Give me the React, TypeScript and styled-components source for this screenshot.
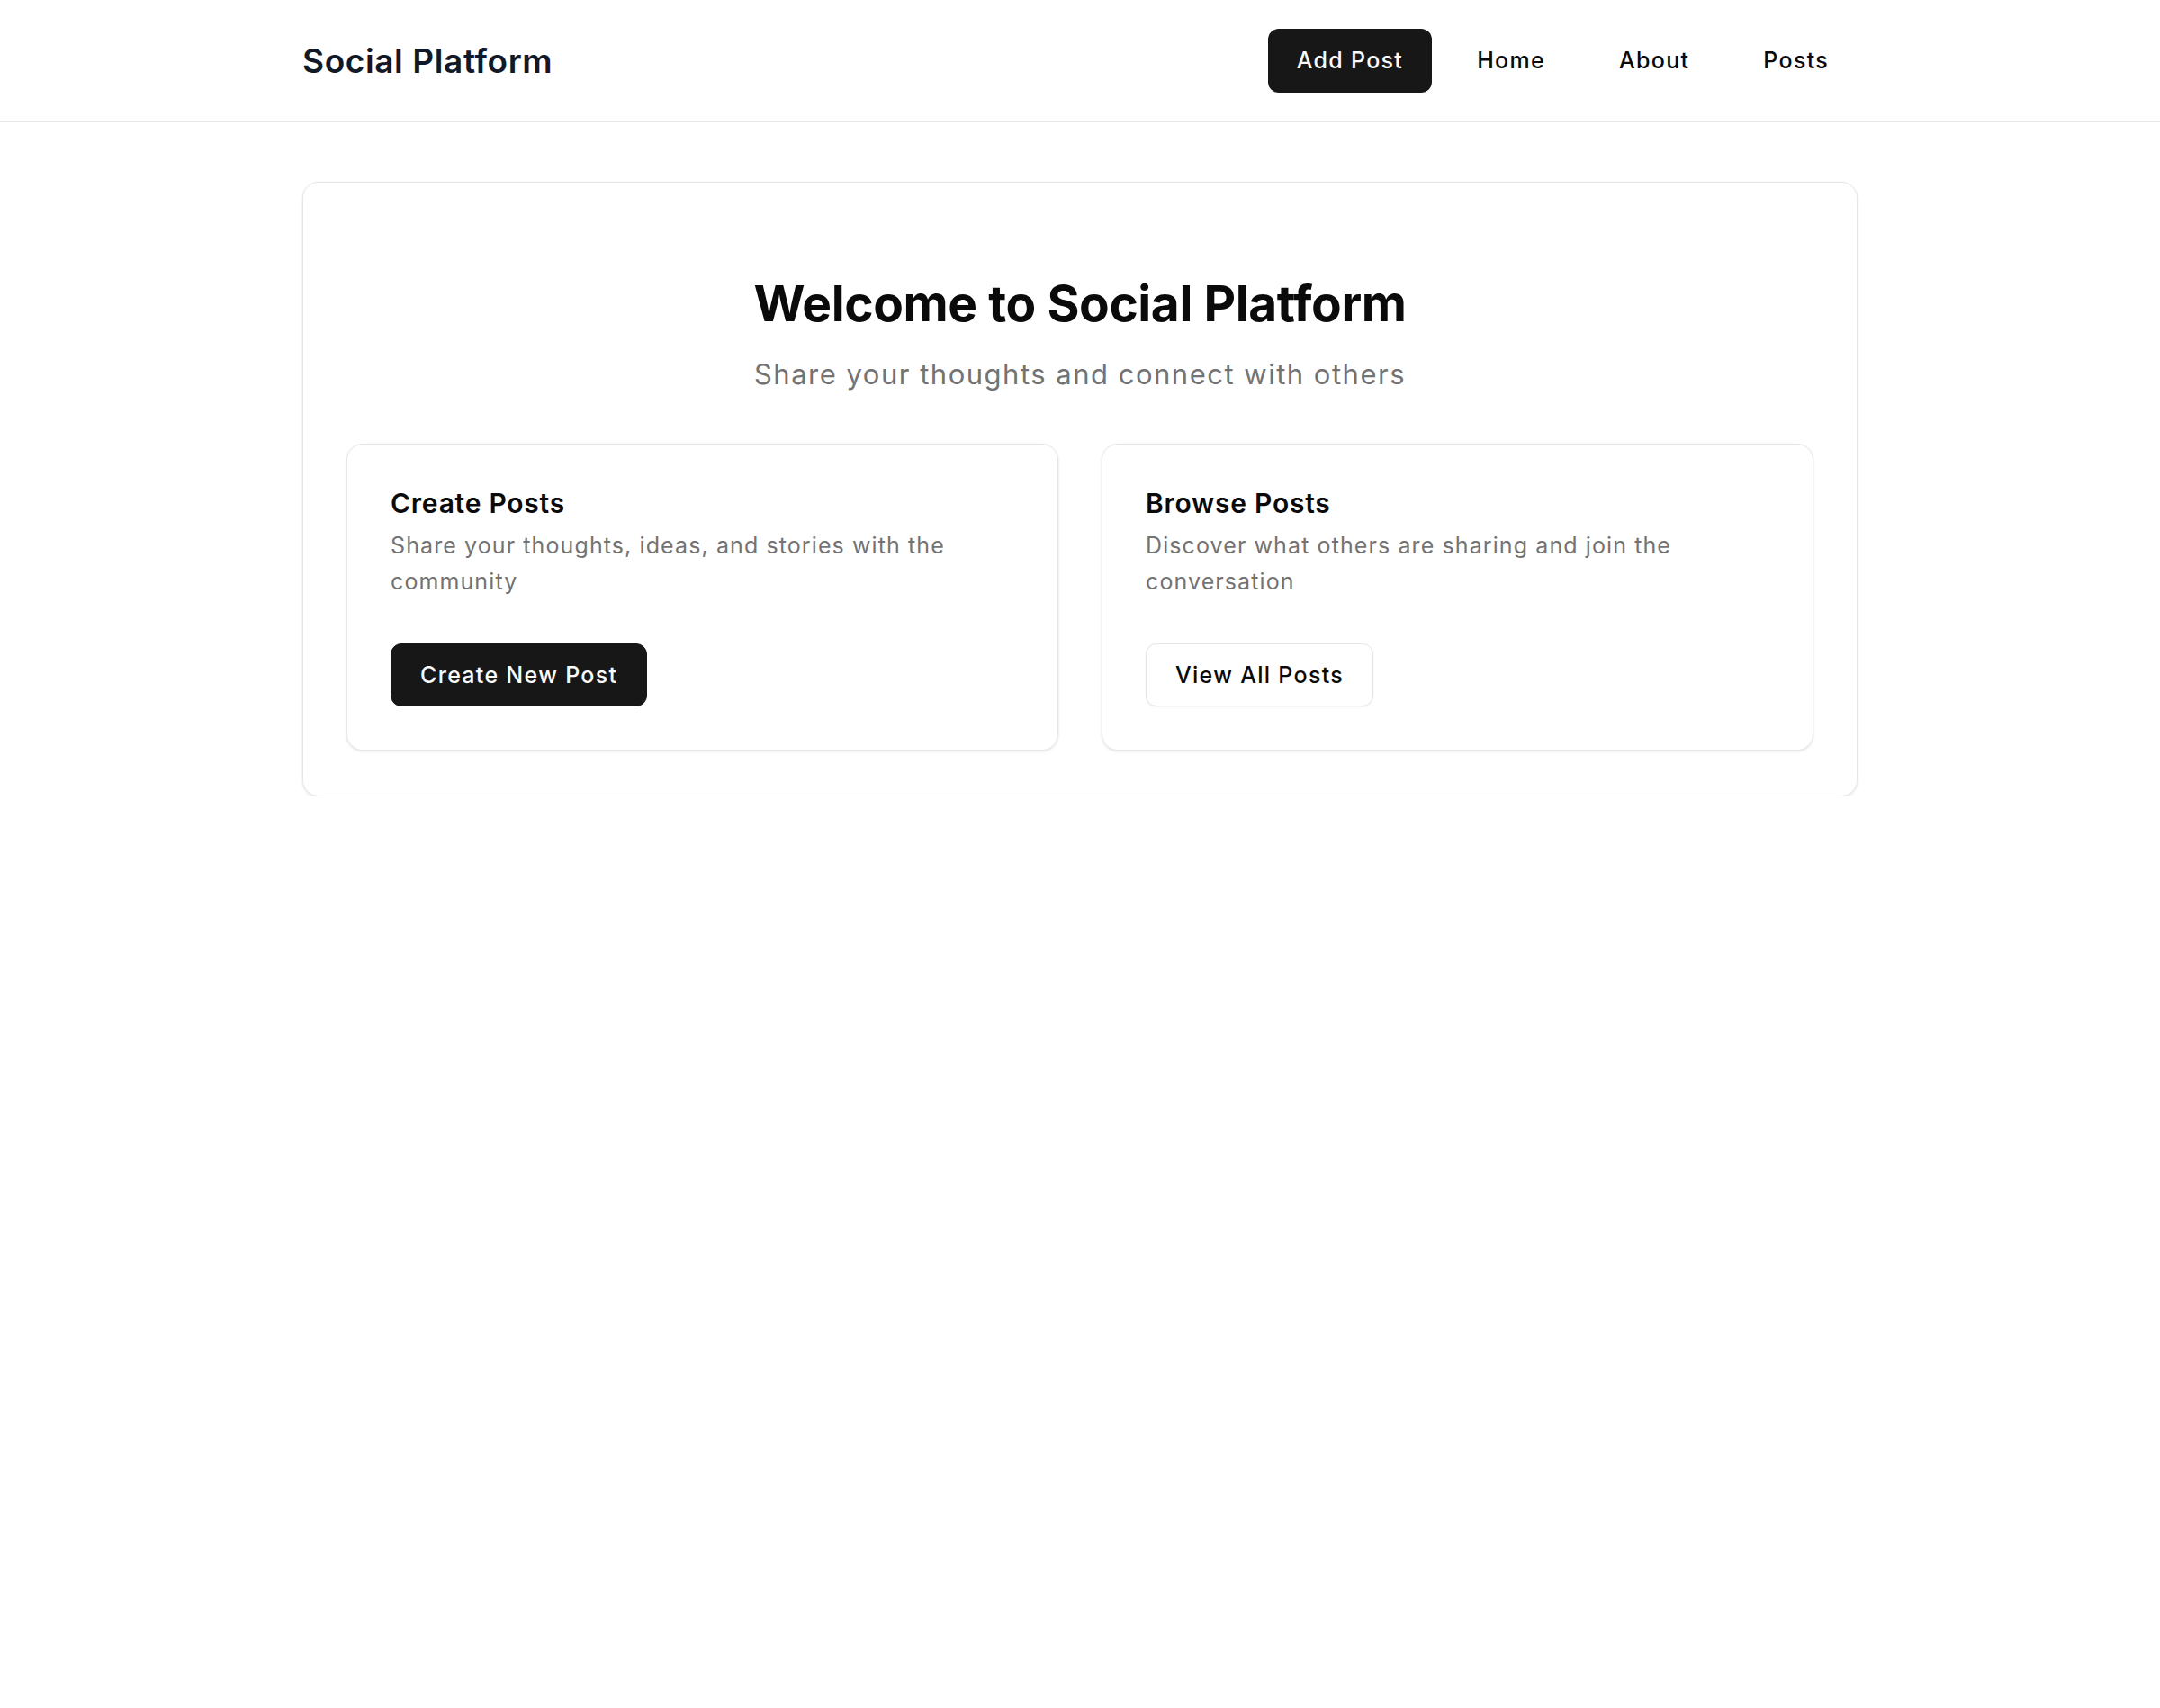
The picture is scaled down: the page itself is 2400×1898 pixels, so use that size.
import React from "react";
import styled, { createGlobalStyle, css } from "styled-components";

const GlobalStyle = createGlobalStyle`
  body {
    margin: 0;
    background: #ffffff;
    font-family: Inter, "Noto Sans", sans-serif;
    color: #0a0a0a;
  }
`;

const Header = styled.header`
  border-bottom: 2px solid #e8e8e8;
`;

const HeaderInner = styled.div`
  max-width: 1728px;
  margin: 0 auto;
  height: 134px;
  display: flex;
  align-items: center;
  justify-content: space-between;
`;

const Logo = styled.div`
  font-size: 37px;
  font-weight: 600;
  color: #111827;
  letter-spacing: 0.6px;
`;

const Nav = styled.nav`
  display: flex;
  gap: 18px;
`;

const buttonBase = css`
  display: inline-flex;
  align-items: center;
  justify-content: center;
  height: 71px;
  padding: 0 32px;
  border-radius: 12px;
  font-family: inherit;
  font-size: 25px;
  font-weight: 500;
  letter-spacing: 1.3px;
  box-sizing: border-box;
  cursor: pointer;
`;

const NavLink = styled.a<{ $active?: boolean }>`
  ${buttonBase};
  text-decoration: none;
  color: ${(p) => (p.$active ? "#fafafa" : "#0a0a0a")};
  background: ${(p) => (p.$active ? "#171717" : "transparent")};
`;

const Main = styled.main`
  max-width: 1728px;
  margin: 66px auto 0;
`;

const HeroCard = styled.section`
  border: 1px solid #e5e5e5;
  border-radius: 18px;
  box-shadow: 0 1px 3px rgba(0, 0, 0, 0.1), 0 1px 2px -1px rgba(0, 0, 0, 0.1);
  padding: 104px 48px 50px;
`;

const Title = styled.h1`
  margin: 0;
  text-align: center;
  font-size: 55px;
  line-height: 60px;
  font-weight: 700;
  letter-spacing: -0.4px;
  color: #0a0a0a;
`;

const Subtitle = styled.p`
  margin: 28px 0 56px;
  text-align: center;
  font-size: 31px;
  line-height: 42px;
  letter-spacing: 1.5px;
  color: #737373;
`;

const Grid = styled.div`
  display: grid;
  grid-template-columns: 1fr 1fr;
  gap: 48px;
`;

const FeatureCard = styled.div`
  border: 1px solid #e5e5e5;
  border-radius: 18px;
  box-shadow: 0 1px 3px rgba(0, 0, 0, 0.1), 0 1px 2px -1px rgba(0, 0, 0, 0.1);
  padding: 44px 48px 48px;
`;

const CardTitle = styled.h3`
  margin: 0;
  font-size: 30px;
  line-height: 42px;
  font-weight: 600;
  letter-spacing: 0.75px;
  color: #0a0a0a;
`;

const CardText = styled.p`
  margin: 6px 0 49px;
  font-size: 25px;
  line-height: 40px;
  letter-spacing: 1.1px;
  color: #737373;
  max-width: 660px;
`;

const Button = styled.button<{ $variant?: "solid" | "outline" }>`
  ${buttonBase};
  height: 70px;
  border: 1px solid ${(p) => (p.$variant === "outline" ? "#e5e5e5" : "#171717")};
  background: ${(p) => (p.$variant === "outline" ? "#ffffff" : "#171717")};
  color: ${(p) => (p.$variant === "outline" ? "#0a0a0a" : "#fafafa")};
  box-shadow: ${(p) =>
    p.$variant === "outline" ? "0 1px 2px rgba(0, 0, 0, 0.05)" : "none"};
`;

const features = [
  {
    title: "Create Posts",
    text: "Share your thoughts, ideas, and stories with the community",
    action: "Create New Post",
    variant: "solid" as const,
  },
  {
    title: "Browse Posts",
    text: "Discover what others are sharing and join the conversation",
    action: "View All Posts",
    variant: "outline" as const,
  },
];

const App = () => {
  return (
    <>
      <GlobalStyle />
      <Header>
        <HeaderInner>
          <Logo>Social Platform</Logo>
          <Nav>
            <NavLink $active href="#">
              Add Post
            </NavLink>
            <NavLink href="#">Home</NavLink>
            <NavLink href="#">About</NavLink>
            <NavLink href="#">Posts</NavLink>
          </Nav>
        </HeaderInner>
      </Header>

      <Main>
        <HeroCard>
          <Title>Welcome to Social Platform</Title>
          <Subtitle>Share your thoughts and connect with others</Subtitle>
          <Grid>
            {features.map((f) => (
              <FeatureCard key={f.title}>
                <CardTitle>{f.title}</CardTitle>
                <CardText>{f.text}</CardText>
                <Button $variant={f.variant}>{f.action}</Button>
              </FeatureCard>
            ))}
          </Grid>
        </HeroCard>
      </Main>
    </>
  );
};

export default App;
